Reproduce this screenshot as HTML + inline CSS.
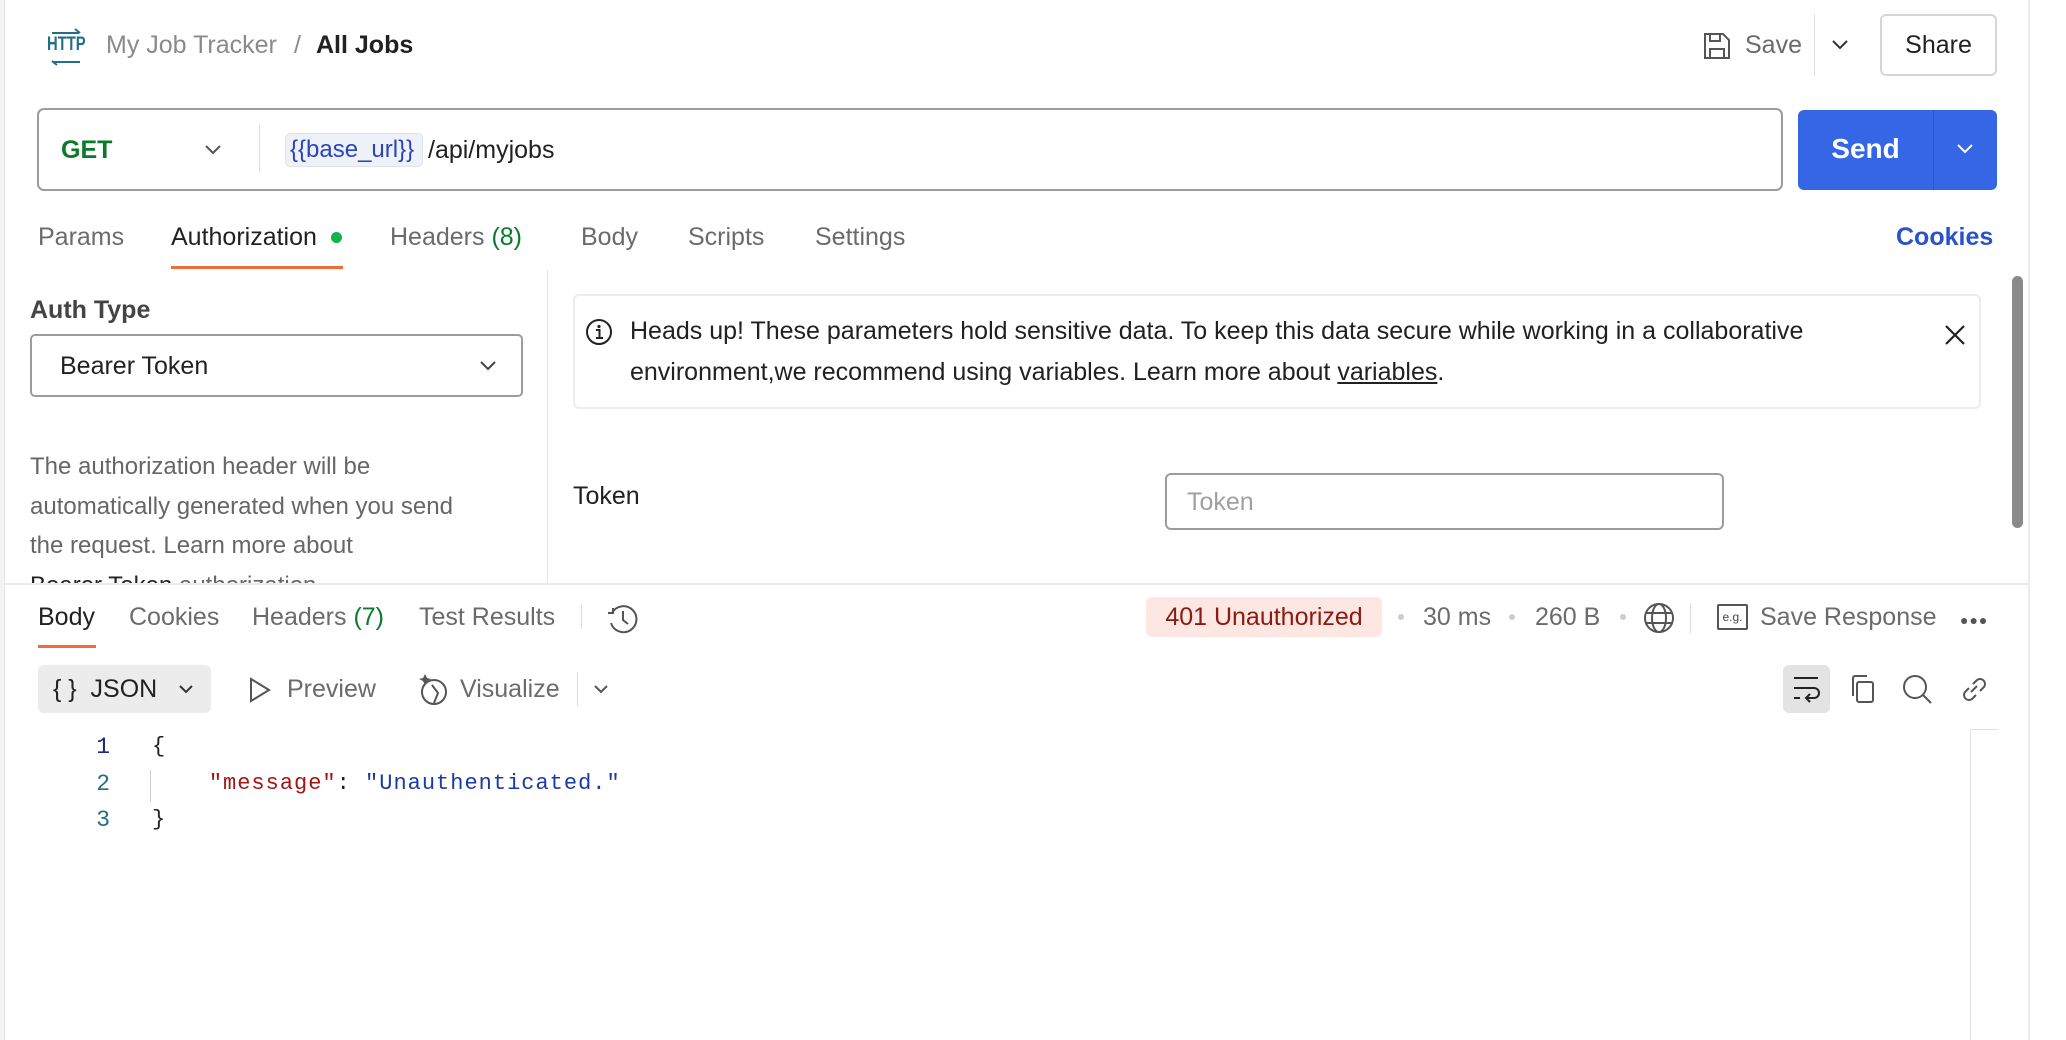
<!DOCTYPE html>
<html><head><meta charset="utf-8"><style>
*{margin:0;padding:0;box-sizing:border-box}
body{width:2066px;height:1040px;overflow:hidden;background:#fff;font-family:"Liberation Sans",sans-serif;color:#212121;position:relative}
.a{position:absolute;white-space:nowrap}
.t{font-size:25px;line-height:32px}
.g{color:#6b6b6b}
svg{position:absolute;overflow:visible}
</style></head><body>
<div class="a" style="left:0;top:0;width:5px;height:1040px;background:#f3f3f3;border-right:1px solid #e6e6e6"></div>
<div class="a" style="left:2028px;top:0;width:2px;height:1040px;background:#ececec"></div>

<!-- header -->
<div class="a" style="left:47px;top:35px;font-size:19px;line-height:20px;font-weight:bold;color:#1f6f86;transform:scaleX(.78);transform-origin:left">HTTP</div>
<svg style="left:48px;top:28px" width="36" height="36"><path d="M4 5H31M27 1L32 5M32 34H5M9 37L4 33" stroke="#1f6f86" stroke-width="2" fill="none"/></svg>
<div class="a t" style="left:106px;top:29px;color:#8a8a8a">My Job Tracker</div>
<div class="a t" style="left:294px;top:29px;color:#8a8a8a">/</div>
<div class="a t" style="left:316px;top:29px;font-weight:bold">All Jobs</div>

<svg style="left:1703px;top:32px" width="28" height="28"><path d="M2 2H20L26 8V26H2Z M7 2V9H17V2 M7 26V17H21V26" stroke="#555" stroke-width="2" fill="none"/></svg>
<div class="a t g" style="left:1745px;top:29px">Save</div>
<div class="a" style="left:1814px;top:14px;width:1px;height:62px;background:#e0e0e0"></div>
<svg style="left:1832px;top:40px" width="16" height="10"><path d="M1 1L8 8L15 1" stroke="#333" stroke-width="2" fill="none"/></svg>
<div class="a" style="left:1880px;top:14px;width:117px;height:62px;border:2px solid #d6d6d6;border-radius:6px"></div>
<div class="a t" style="left:1880px;top:29px;width:117px;text-align:center">Share</div>

<!-- url bar -->
<div class="a" style="left:37px;top:108px;width:1746px;height:83px;border:2px solid #9c9c9c;border-radius:7px"></div>
<div class="a t" style="left:61px;top:134px;font-weight:bold;color:#0b7a2c">GET</div>
<svg style="left:205px;top:145px" width="16" height="10"><path d="M1 1L8 8L15 1" stroke="#555" stroke-width="2" fill="none"/></svg>
<div class="a" style="left:259px;top:125px;width:1px;height:48px;background:#ddd"></div>
<div class="a" style="left:285px;top:133px;width:138px;height:34px;background:#eef1f8;border:1px solid #dde3ee;border-radius:5px"></div>
<div class="a t" style="left:290px;top:134px;color:#2a45b8;font-size:24px">{{base_url}}</div>
<div class="a t" style="left:428px;top:134px">/api/myjobs</div>

<div class="a" style="left:1798px;top:110px;width:199px;height:80px;background:#3566e6;border-radius:6px"></div>
<div class="a" style="left:1933px;top:110px;width:1px;height:80px;background:#2b55c9"></div>
<div class="a t" style="left:1798px;top:133px;width:135px;text-align:center;color:#fff;font-weight:bold;font-size:28px">Send</div>
<svg style="left:1957px;top:144px" width="16" height="10"><path d="M1 1L8 8L15 1" stroke="#fff" stroke-width="2" fill="none"/></svg>

<!-- req tabs -->
<div class="a t g" style="left:38px;top:221px">Params</div>
<div class="a t" style="left:171px;top:221px">Authorization</div>
<div class="a" style="left:331px;top:232px;width:11px;height:11px;border-radius:50%;background:#14b34a"></div>
<div class="a" style="left:171px;top:266px;width:172px;height:3px;background:#f26b3a"></div>
<div class="a t g" style="left:390px;top:221px">Headers <span style="color:#0b7a2c">(8)</span></div>
<div class="a t g" style="left:581px;top:221px">Body</div>
<div class="a t g" style="left:688px;top:221px">Scripts</div>
<div class="a t g" style="left:815px;top:221px">Settings</div>
<div class="a t" style="left:1896px;top:221px;color:#2a52cc;font-weight:bold">Cookies</div>

<div class="a" style="left:547px;top:270px;width:1px;height:314px;background:#e3e3e3"></div>

<!-- auth left -->
<div class="a t" style="left:30px;top:294px;font-weight:bold;color:#444">Auth Type</div>
<div class="a" style="left:30px;top:334px;width:493px;height:63px;border:2px solid #9c9c9c;border-radius:5px"></div>
<div class="a t" style="left:60px;top:350px">Bearer Token</div>
<svg style="left:480px;top:361px" width="16" height="10"><path d="M1 1L8 8L15 1" stroke="#444" stroke-width="2" fill="none"/></svg>
<div class="a g" style="left:30px;top:447px;font-size:24px;line-height:39.7px;color:#666;height:137px;overflow:hidden">The authorization header will be<br>automatically generated when you send<br>the request. Learn more about<br><span style="color:#222">Bearer Token</span> authorization</div>

<!-- info box -->
<div class="a" style="left:573px;top:294px;width:1408px;height:115px;border:2px solid #ececec;border-radius:6px"></div>
<svg style="left:585px;top:318px" width="28" height="28"><circle cx="14" cy="14" r="12" stroke="#222" stroke-width="2" fill="none"/><circle cx="14" cy="8.5" r="1.6" fill="#222"/><path d="M11 12H14.5V20M11 20H18" stroke="#222" stroke-width="2" fill="none"/></svg>
<div class="a" style="left:630px;top:311px;font-size:25px;line-height:41px">Heads up! These parameters hold sensitive data. To keep this data secure while working in a collaborative<br>environment,we recommend using variables. Learn more about <u>variables</u>.</div>
<svg style="left:1945px;top:325px" width="20" height="20"><path d="M1 1L19 19M19 1L1 19" stroke="#222" stroke-width="2.2"/></svg>

<div class="a t" style="left:573px;top:480px">Token</div>
<div class="a" style="left:1165px;top:473px;width:559px;height:57px;border:2px solid #9c9c9c;border-radius:6px"></div>
<div class="a t" style="left:1187px;top:486px;color:#a0a0a0">Token</div>

<div class="a" style="left:2012px;top:276px;width:11px;height:252px;background:#8a8a8a;border-radius:6px"></div>

<!-- separator -->
<div class="a" style="left:5px;top:583px;width:2023px;height:2px;background:#ebebeb"></div>

<!-- response tabs -->
<div class="a t" style="left:38px;top:601px">Body</div>
<div class="a" style="left:38px;top:645px;width:58px;height:3px;background:#f26b3a"></div>
<div class="a t g" style="left:129px;top:601px">Cookies</div>
<div class="a t g" style="left:252px;top:601px">Headers <span style="color:#0b7a2c">(7)</span></div>
<div class="a t g" style="left:419px;top:601px">Test Results</div>
<div class="a" style="left:581px;top:605px;width:1px;height:24px;background:#ddd"></div>
<svg style="left:606px;top:603px" width="32" height="32"><path d="M6 10A13 13 0 1 1 5 20" stroke="#555" stroke-width="2" fill="none"/><path d="M2 10H7V5" stroke="#555" stroke-width="2" fill="none"/><path d="M17 8V17L22 21" stroke="#555" stroke-width="2" fill="none"/></svg>

<div class="a" style="left:1146px;top:597px;width:236px;height:40px;background:#fde7e3;border-radius:6px"></div>
<div class="a t" style="left:1146px;top:601px;width:236px;text-align:center;color:#8b1a10">401 Unauthorized</div>
<div class="a" style="left:1398px;top:614px;width:6px;height:6px;border-radius:50%;background:#ccc"></div>
<div class="a t g" style="left:1423px;top:601px">30 ms</div>
<div class="a" style="left:1509px;top:614px;width:6px;height:6px;border-radius:50%;background:#ccc"></div>
<div class="a t g" style="left:1535px;top:601px">260 B</div>
<div class="a" style="left:1620px;top:614px;width:6px;height:6px;border-radius:50%;background:#ccc"></div>
<svg style="left:1643px;top:602px" width="32" height="32"><circle cx="16" cy="16" r="14" stroke="#555" stroke-width="2" fill="none"/><ellipse cx="16" cy="16" rx="7" ry="14" stroke="#555" stroke-width="2" fill="none"/><path d="M3 11H29M3 21H29" stroke="#555" stroke-width="2"/></svg>
<div class="a" style="left:1690px;top:603px;width:1px;height:30px;background:#ddd"></div>
<div class="a" style="left:1717px;top:604px;width:31px;height:26px;border:2px solid #555;border-radius:2px;font-size:12px;line-height:22px;text-align:center;color:#444">e.g.</div>
<div class="a t g" style="left:1760px;top:601px">Save Response</div>
<div class="a" style="left:1960px;top:612px;font-size:14px;letter-spacing:1px;color:#555">●●●</div>

<!-- json toolbar -->
<div class="a" style="left:38px;top:665px;width:173px;height:48px;background:#ececec;border-radius:6px"></div>
<div class="a t" style="left:53px;top:673px">{ }&nbsp; JSON</div>
<svg style="left:179px;top:685px" width="14" height="9"><path d="M1 1L7 7L13 1" stroke="#333" stroke-width="2" fill="none"/></svg>
<svg style="left:249px;top:677px" width="22" height="26"><path d="M2 2L20 13L2 24Z" stroke="#555" stroke-width="2" fill="none"/></svg>
<div class="a t g" style="left:287px;top:673px">Preview</div>
<svg style="left:418px;top:673px" width="32" height="34"><circle cx="16" cy="19" r="12" stroke="#555" stroke-width="2" fill="none"/><path d="M14 12L20 20L16 30" stroke="#555" stroke-width="2" fill="none"/><path d="M7 1L9 5L13 6L9 8L7 12L5 8L1 6L5 5Z" fill="#555"/></svg>
<div class="a t g" style="left:460px;top:673px">Visualize</div>
<div class="a" style="left:577px;top:672px;width:1px;height:34px;background:#ddd"></div>
<svg style="left:594px;top:685px" width="14" height="9"><path d="M1 1L7 7L13 1" stroke="#555" stroke-width="2" fill="none"/></svg>

<div class="a" style="left:1783px;top:665px;width:47px;height:48px;background:#e3e3e3;border-radius:6px"></div>
<svg style="left:1792px;top:674px" width="30" height="30"><path d="M2 4H26M2 14H22A5 5 0 0 1 22 24H14M18 20L14 24L18 28M2 24H8" stroke="#222" stroke-width="2" fill="none"/></svg>
<svg style="left:1848px;top:674px" width="30" height="30"><rect x="9" y="8" width="16" height="20" rx="2" stroke="#555" stroke-width="2" fill="none"/><path d="M5 22V4A2 2 0 0 1 7 2H19" stroke="#555" stroke-width="2" fill="none"/></svg>
<svg style="left:1902px;top:674px" width="32" height="32"><circle cx="13" cy="13" r="11" stroke="#555" stroke-width="2" fill="none"/><path d="M21 21L29 29" stroke="#555" stroke-width="2"/></svg>
<svg style="left:1959px;top:674px" width="30" height="30"><path d="M12 18L18 12M10 14L6 18A5 5 0 0 0 13 25L17 21M14 10L18 6A5 5 0 0 1 25 13L21 17" stroke="#555" stroke-width="2" fill="none"/></svg>

<!-- code -->
<div class="a" style="left:60px;top:729px;width:50px;text-align:right;font-family:'Liberation Mono',monospace;font-size:23px;line-height:36.5px"><span style="color:#1b2a7a">1</span><br><span style="color:#2a6a8a">2</span><br><span style="color:#2a6a8a">3</span></div>
<div class="a" style="left:150px;top:770px;width:1px;height:32px;background:#ccc"></div>
<div class="a" style="left:152px;top:729px;font-family:'Liberation Mono',monospace;font-size:22px;letter-spacing:1px;line-height:36.5px">{<br>&nbsp;&nbsp;&nbsp;&nbsp;<span style="color:#a31515">"message"</span>: <span style="color:#1a3aa8">"Unauthenticated."</span><br>}</div>
<div class="a" style="left:1970px;top:729px;width:1px;height:311px;background:#e3e3e3"></div>
<div class="a" style="left:1970px;top:729px;width:28px;height:1px;background:#e3e3e3"></div>
</body></html>
